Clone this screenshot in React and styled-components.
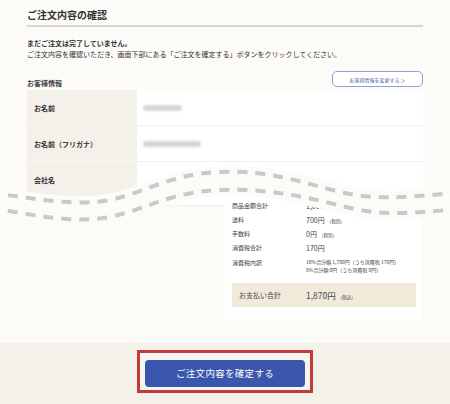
import React from 'react'
import styled, { createGlobalStyle } from 'styled-components'

const GlobalStyle = createGlobalStyle`
  html, body {
    margin: 0;
    padding: 0;
    background: #f3f1ea;
    font-family: "Noto Sans CJK JP", "Noto Sans", sans-serif;
    color: #333;
  }
`

const Page = styled.div`
  position: relative;
  width: 450px;
  height: 404px;
  overflow: hidden;
`

const Main = styled.div`
  background: #fcfbf7;
  height: 343px;
  box-sizing: border-box;
  padding: 6px 27px 0;
`

const Title = styled.h1`
  margin: 0;
  font-size: 10px;
  line-height: 18px;
  font-weight: 700;
  padding-bottom: 1px;
  border-bottom: 2px solid #d9d6cc;
`

const Notice = styled.div`
  margin-top: 11px;
  font-size: 7px;
  line-height: 11px;
  > strong {
    display: block;
    font-weight: 700;
  }
`

const SectionHead = styled.div`
  display: flex;
  align-items: flex-end;
  justify-content: space-between;
  margin-top: 11px;
  height: 19px;
`

const SectionTitle = styled.span`
  font-size: 7px;
  font-weight: 700;
  line-height: 10px;
  margin-bottom: 2px;
  color: #444;
`

const EditButton = styled.button`
  width: 91px;
  height: 16px;
  border: 1px solid #8e9fd5;
  border-radius: 5px;
  background: #fff;
  color: #4a5ea8;
  font-family: inherit;
  font-size: 5px;
  padding: 0;
  margin-bottom: 3px;
`

const Table = styled.div`
  display: grid;
  grid-template-columns: 110px 1fr;
  background: #fff;
`

const Label = styled.div`
  background: #f3f1e9;
  font-size: 7px;
  font-weight: 700;
  padding-left: 7px;
  height: ${p => p.$h || 36}px;
  display: flex;
  align-items: ${p => (p.$top ? 'flex-start' : 'center')};
  padding-top: ${p => (p.$top ? 13 : 0)}px;
  box-sizing: border-box;
  border-bottom: 1px solid #f8f7f2;
`

const Value = styled.div`
  padding-left: 6px;
  display: flex;
  align-items: center;
  border-bottom: 1px solid #f2f1ec;
`

const Blur = styled.span`
  display: block;
  width: ${p => p.$w}px;
  height: 6px;
  border-radius: 3px;
  background: #d6d6d6;
  filter: blur(1px);
`

const Totals = styled.div`
  width: 197px;
  margin: -24px 1px 0 auto;
  background: #fff;
  padding: 3px 6px 12px 7px;
  box-sizing: border-box;
  position: relative;
`

const Row = styled.div`
  display: grid;
  grid-template-columns: 74px 1fr;
  align-items: start;
  height: ${p => (p.$auto ? 'auto' : '14px')};
  white-space: nowrap;
`

const RowLabel = styled.span`
  font-size: 6px;
  line-height: 14px;
  padding-top: ${p => (p.$pad ? 1 : 0)}px;
  color: #444;
`

const RowValue = styled.span`
  font-size: 7px;
  line-height: 14px;
  color: #444;
  > small {
    font-size: 4.5px;
    line-height: 14px;
    margin-left: 2px;
  }
`

const Breakdown = styled.div`
  font-size: 5px;
  line-height: 8px;
  color: #444;
  padding-top: 3px;
`

const PayRow = styled.div`
  display: grid;
  grid-template-columns: 67px 1fr;
  align-items: center;
  height: 24px;
  margin-top: 9px;
  padding-left: 7px;
  background: #f1eadb;
`

const PayLabel = styled.span`
  font-size: 7px;
  color: #444;
`

const PayValue = styled.span`
  font-size: 8.5px;
  color: #444;
  > small {
    font-size: 4.5px;
    margin-left: 2px;
  }
`

const Wave = styled.svg`
  position: absolute;
  left: 0;
  top: 0;
  pointer-events: none;
`

const Footer = styled.div`
  height: 61px;
  display: flex;
  justify-content: center;
  padding-top: 7px;
  box-sizing: border-box;
`

const Highlight = styled.div`
  width: 176px;
  height: 43px;
  box-sizing: border-box;
  border: 3px solid #c23a3c;
  background: #f7f5f0;
  padding: 5px;
`

const ConfirmButton = styled.button`
  width: 100%;
  height: 100%;
  border: none;
  border-radius: 4px;
  background: #3a56ad;
  color: #fff;
  font-family: inherit;
  font-size: 9.5px;
  letter-spacing: 0.3px;
`

const mid =
  'M -10 201 C 30 205.5, 70 215.5, 110 208.5 C 150 199.5, 170 183, 220 181 C 270 179, 305 190, 345 200 C 377 207.5, 405 206, 460 200.5'
const upper =
  'M -10 193 C 30 197, 70 207, 110 200 C 150 191, 170 174, 220 172 C 270 170, 300 182, 340 192 C 370 199, 400 199, 460 192'
const lower =
  'M -10 208 C 30 214, 70 224, 110 217 C 150 208, 170 192, 220 190 C 270 188, 310 198, 350 208 C 385 216, 410 213, 460 209'

const rows = [
  ['商品点数合計', '1点'],
  ['商品金額合計', '1,000円', '（税別）'],
  ['送料', '700円', '（税別）'],
  ['手数料', '0円', '（税別）'],
  ['消費税合計', '170円']
]

export default function App() {
  return (
    <Page>
      <GlobalStyle />
      <Main>
        <Title>ご注文内容の確認</Title>
        <Notice>
          <strong>まだご注文は完了していません。</strong>
          ご注文内容を確認いただき、画面下部にある「ご注文を確定する」ボタンをクリックしてください。
        </Notice>
        <SectionHead>
          <SectionTitle>お客様情報</SectionTitle>
          <EditButton>お客様情報を変更する ＞</EditButton>
        </SectionHead>
        <Table>
          <Label>お名前</Label>
          <Value>
            <Blur $w={39} />
          </Value>
          <Label>お名前（フリガナ）</Label>
          <Value>
            <Blur $w={58} />
          </Value>
          <Label $h={44} $top>会社名</Label>
          <Value />
        </Table>
        <Totals>
          {rows.map(([label, value, note]) => (
            <Row key={label}>
              <RowLabel>{label}</RowLabel>
              <RowValue>
                {value}
                {note && <small>{note}</small>}
              </RowValue>
            </Row>
          ))}
          <Row $auto>
            <RowLabel $pad>消費税内訳</RowLabel>
            <Breakdown>
              10%合計額 1,700円（うち消費税 170円）
              <br />
              8%合計額 0円（うち消費税 0円）
            </Breakdown>
          </Row>
          <PayRow>
            <PayLabel>お支払い合計</PayLabel>
            <PayValue>
              1,870円<small>（税込）</small>
            </PayValue>
          </PayRow>
        </Totals>
      </Main>
      <Footer>
        <Highlight>
          <ConfirmButton>ご注文内容を確定する</ConfirmButton>
        </Highlight>
      </Footer>
      <Wave width="450" height="404" viewBox="0 0 450 404">
        <path d={mid} fill="none" stroke="#fcfbf7" strokeWidth="29" />
        <path d={upper} fill="none" stroke="#c9c9c9" strokeWidth="4" strokeDasharray="10 8" />
        <path d={lower} fill="none" stroke="#c9c9c9" strokeWidth="4" strokeDasharray="10 8" />
      </Wave>
    </Page>
  )
}
